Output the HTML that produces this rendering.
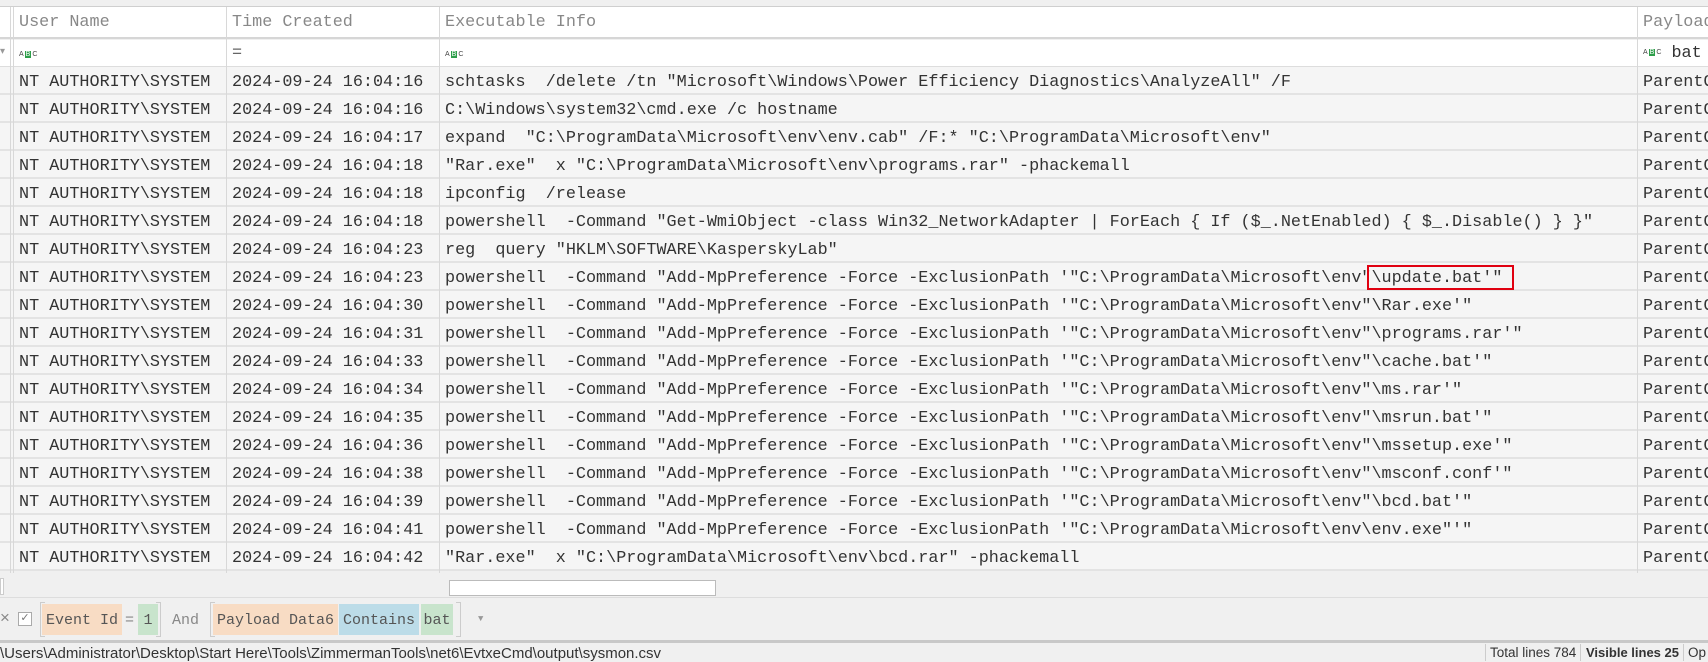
<!DOCTYPE html>
<html><head><meta charset="utf-8"><style>
*{margin:0;padding:0;box-sizing:border-box}
body{width:1708px;height:661px;overflow:hidden;background:#f0f0f0;font-family:"Liberation Mono",monospace;font-size:16.8px;color:#333;position:relative}
.abs{position:absolute;white-space:pre}
.top{left:0;top:0;width:1708px;height:7px;background:#f0f0f0;border-bottom:1px solid #cfcfcf}
.hdr{left:0;top:7px;width:1708px;height:32px;background:#fff;border-bottom:2px solid #d6d6d6}
.flt{left:0;top:40px;width:1708px;height:27px;background:#fff;border-bottom:1px solid #ddd}
.row{left:0;width:1708px;height:28px;background:#f5f5f5;border-bottom:2px solid #e3e3e3}
.vl{position:absolute;top:7px;width:1px;background:#d8d8d8;height:566px}
.c{position:absolute;top:2px;line-height:28px}
.abc{display:inline-block;vertical-align:middle;font-size:7px;font-family:"Liberation Sans",sans-serif;color:#444}
.abc b{display:inline-block;background:#2e9e4a;color:#fff;padding:0 1px;margin:0 1px;font-weight:normal}
.pill{position:absolute;top:604px;height:31px;line-height:33px;white-space:nowrap;color:#555;font-size:15px;text-align:center}
.st{position:absolute;top:645px;font-family:'Liberation Sans',sans-serif;font-size:13.5px;white-space:nowrap}
</style></head><body>
<div class="abs top"></div>
<div class="abs hdr"></div>
<div class="abs flt"></div>
<div id="rows"></div>
<div class="vl" style="left:10px"></div><div class="vl" style="left:13px"></div>
<div class="vl" style="left:226px"></div><div class="vl" style="left:439px"></div><div class="vl" style="left:1637px"></div>
<div class="abs" style="left:19px;top:13px;color:#888">User Name</div>
<div class="abs" style="left:232px;top:13px;color:#888">Time Created</div>
<div class="abs" style="left:445px;top:13px;color:#888">Executable Info</div>
<div class="abs" style="left:1643px;top:13px;color:#888">Payload</div>
<div class="abs" style="left:0;top:46px;color:#999;font-size:10px">▾</div>
<div class="abs" style="left:19px;top:46px"><span class="abc">A<b>B</b>C</span></div>
<div class="abs" style="left:232px;top:44px;color:#666">=</div>
<div class="abs" style="left:445px;top:46px"><span class="abc">A<b>B</b>C</span></div>
<div class="abs" style="left:1643px;top:44px"><span class="abc">A<b>B</b>C</span> bat</div>
<div class="abs" style="left:1367px;top:265px;width:147px;height:25px;border:2px solid #e00010"></div>
<div class="abs" style="left:0;top:573px;width:1708px;height:24px;background:#f0f0f0"></div>
<div class="abs" style="left:0;top:578px;width:4px;height:17px;background:#fff;border:1px solid #ccc"></div>
<div class="abs" style="left:449px;top:580px;width:267px;height:16px;background:#fff;border:1px solid #bbb"></div>
<div class="abs" style="left:0;top:597px;width:1708px;height:1px;background:#ddd"></div>
<div class="abs" style="left:0;top:608px;color:#888;font-family:'Liberation Sans',sans-serif">×</div>
<div class="abs" style="left:18px;top:612px;width:14px;height:14px;border:1px solid #aaa;background:#fff;font-size:11px;line-height:12px;text-align:center;color:#777">✓</div>
<div class="abs" style="left:40px;top:602px;width:5px;height:35px;border:1px solid #ccc;border-right:none"></div>
<div class="pill" style="left:42px;width:80px;background:#f8dcc4">Event Id</div>
<div class="abs" style="left:125px;top:612px;color:#888;font-size:15px">=</div>
<div class="pill" style="left:138px;width:20px;background:#c8e4cc">1</div>
<div class="abs" style="left:156px;top:602px;width:5px;height:35px;border:1px solid #ccc;border-left:none"></div>
<div class="abs" style="left:172px;top:612px;color:#888;font-size:15px">And</div>
<div class="abs" style="left:210px;top:602px;width:5px;height:35px;border:1px solid #ccc;border-right:none"></div>
<div class="pill" style="left:213px;width:125px;background:#f8dcc4">Payload Data6</div>
<div class="pill" style="left:339px;width:80px;background:#bcdce8">Contains</div>
<div class="pill" style="left:421px;width:32px;background:#c8e4cc">bat</div>
<div class="abs" style="left:456px;top:602px;width:5px;height:35px;border:1px solid #ccc;border-left:none"></div>
<div class="abs" style="left:478px;top:614px;color:#999;font-size:9px">▼</div>
<div class="abs" style="left:0;top:640px;width:1708px;height:3px;background:#c8c8c8"></div>
<div class="abs" style="left:0;top:643px;width:1708px;height:18px;background:#f0f0f0"></div>
<div class="abs" style="left:0;top:645px;font-family:'Liberation Sans',sans-serif;font-size:15px;color:#333">\Users\Administrator\Desktop\Start Here\Tools\ZimmermanTools\net6\EvtxeCmd\output\sysmon.csv</div>
<div class="abs" style="left:1485px;top:644px;width:1px;height:17px;background:#ccc"></div>
<div class="st" style="left:1490px">Total lines 784</div>
<div class="abs" style="left:1580px;top:644px;width:1px;height:17px;background:#ccc"></div>
<div class="st" style="left:1586px;font-weight:bold;font-size:13px">Visible lines 25</div>
<div class="abs" style="left:1683px;top:644px;width:1px;height:17px;background:#ccc"></div>
<div class="st" style="left:1688px">Op</div>
<script>
var d=[
["16:04:16",'schtasks  /delete /tn "Microsoft\\Windows\\Power Efficiency Diagnostics\\AnalyzeAll" /F'],
["16:04:16",'C:\\Windows\\system32\\cmd.exe /c hostname'],
["16:04:17",'expand  "C:\\ProgramData\\Microsoft\\env\\env.cab" /F:* "C:\\ProgramData\\Microsoft\\env"'],
["16:04:18",'"Rar.exe"  x "C:\\ProgramData\\Microsoft\\env\\programs.rar" -phackemall'],
["16:04:18",'ipconfig  /release'],
["16:04:18",'powershell  -Command "Get-WmiObject -class Win32_NetworkAdapter | ForEach { If ($_.NetEnabled) { $_.Disable() } }"'],
["16:04:23",'reg  query "HKLM\\SOFTWARE\\KasperskyLab"'],
["16:04:23",'powershell  -Command "Add-MpPreference -Force -ExclusionPath \'"C:\\ProgramData\\Microsoft\\env"\\update.bat\'"'],
["16:04:30",'powershell  -Command "Add-MpPreference -Force -ExclusionPath \'"C:\\ProgramData\\Microsoft\\env"\\Rar.exe\'"'],
["16:04:31",'powershell  -Command "Add-MpPreference -Force -ExclusionPath \'"C:\\ProgramData\\Microsoft\\env"\\programs.rar\'"'],
["16:04:33",'powershell  -Command "Add-MpPreference -Force -ExclusionPath \'"C:\\ProgramData\\Microsoft\\env"\\cache.bat\'"'],
["16:04:34",'powershell  -Command "Add-MpPreference -Force -ExclusionPath \'"C:\\ProgramData\\Microsoft\\env"\\ms.rar\'"'],
["16:04:35",'powershell  -Command "Add-MpPreference -Force -ExclusionPath \'"C:\\ProgramData\\Microsoft\\env"\\msrun.bat\'"'],
["16:04:36",'powershell  -Command "Add-MpPreference -Force -ExclusionPath \'"C:\\ProgramData\\Microsoft\\env"\\mssetup.exe\'"'],
["16:04:38",'powershell  -Command "Add-MpPreference -Force -ExclusionPath \'"C:\\ProgramData\\Microsoft\\env"\\msconf.conf\'"'],
["16:04:39",'powershell  -Command "Add-MpPreference -Force -ExclusionPath \'"C:\\ProgramData\\Microsoft\\env"\\bcd.bat\'"'],
["16:04:41",'powershell  -Command "Add-MpPreference -Force -ExclusionPath \'"C:\\ProgramData\\Microsoft\\env\\env.exe"\'"'],
["16:04:42",'"Rar.exe"  x "C:\\ProgramData\\Microsoft\\env\\bcd.rar" -phackemall']];
var h='';function e(s){return s.replace(/&/g,'&amp;').replace(/</g,'&lt;');}
d.forEach(function(r,i){var t=67+i*28;
h+='<div class="abs row" style="top:'+t+'px"><span class="c" style="left:19px">NT AUTHORITY\\SYSTEM</span><span class="c" style="left:232px">2024-09-24 '+r[0]+'</span><span class="c" style="left:445px">'+e(r[1])+'</span><span class="c" style="left:1643px">ParentC</span></div>';});
document.getElementById('rows').innerHTML=h;
</script>
</body></html>
